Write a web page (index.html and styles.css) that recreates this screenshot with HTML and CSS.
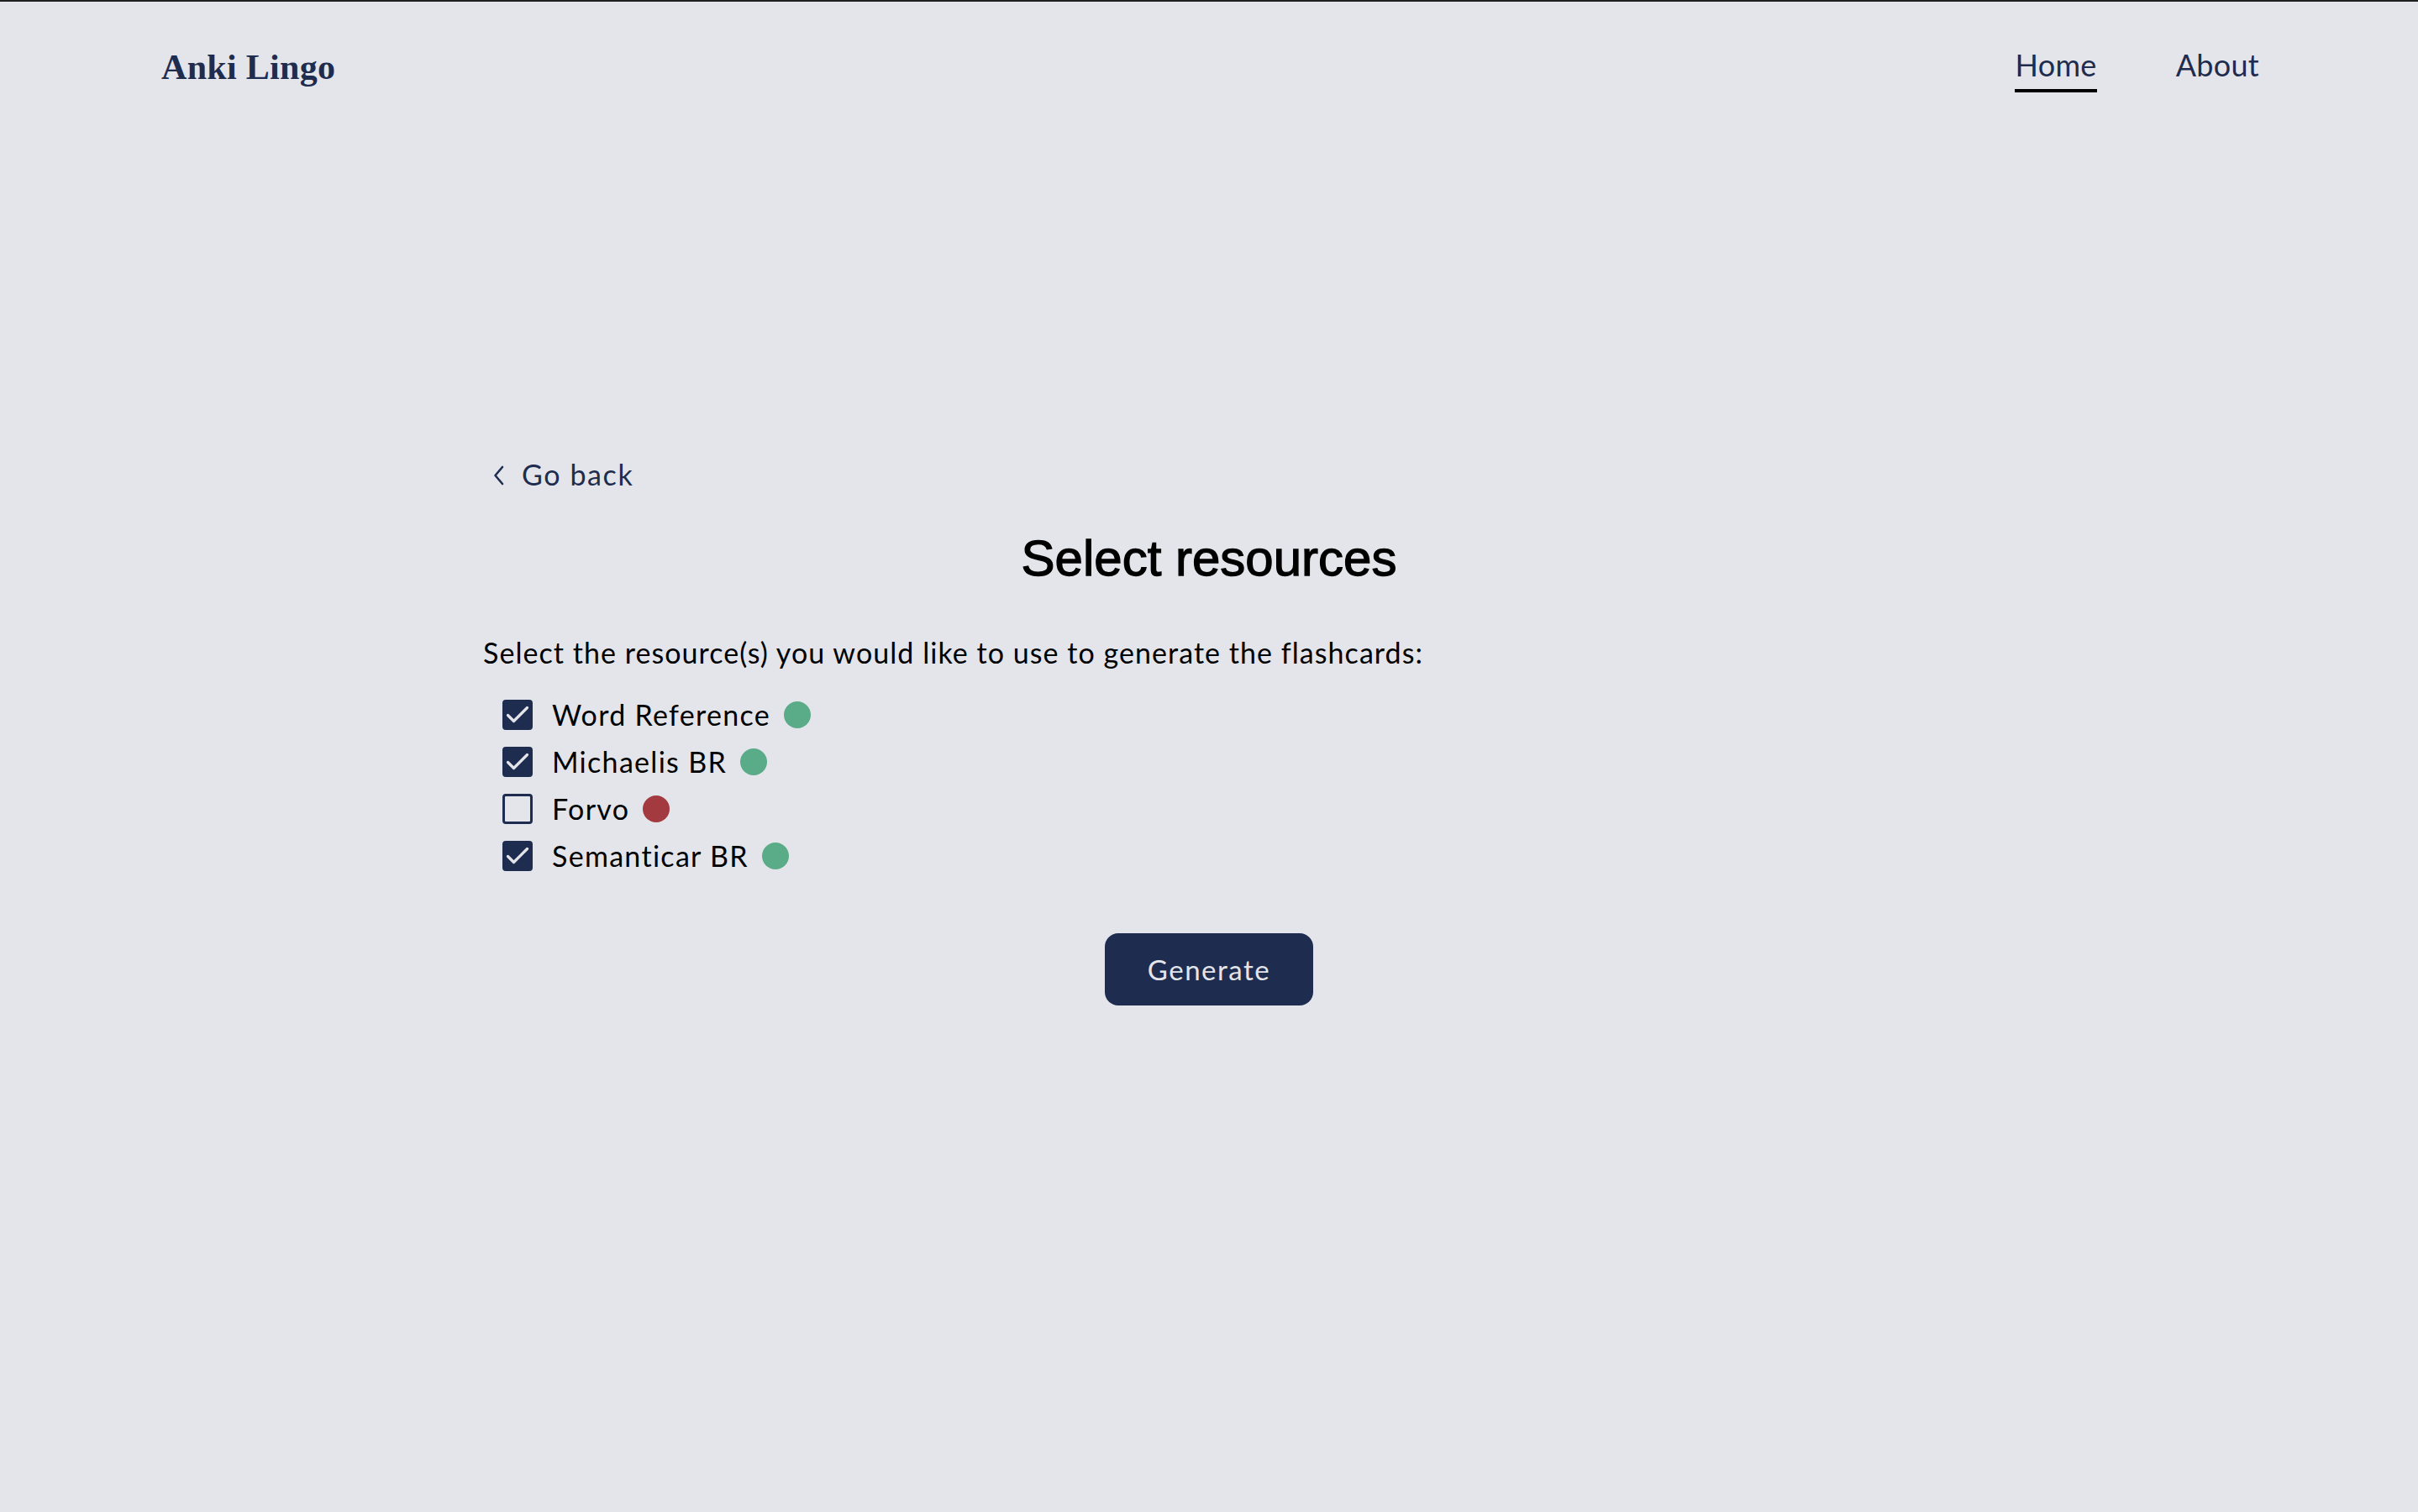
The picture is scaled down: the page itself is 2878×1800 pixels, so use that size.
FILE: index.html
```html
<!DOCTYPE html>
<html lang="en">
<head>
<meta charset="utf-8">
<title>Anki Lingo</title>
<link rel="stylesheet" href="styles.css">
</head>
<body>
<header class="header">
  <a class="logo" href="#">Anki Lingo</a>
  <nav class="nav">
    <a class="nav-link active" href="#">Home</a>
    <a class="nav-link" href="#">About</a>
  </nav>
</header>
<main class="main">
  <a class="back" href="#">
    <svg class="chev" width="14" height="24" viewBox="0 0 14 24"><path d="M11 2 L2.5 12 L11 22" fill="none" stroke="#1e2d4f" stroke-width="2.6" stroke-linecap="round" stroke-linejoin="round"/></svg>
    <span>Go back</span>
  </a>
  <h1 class="title">Select resources</h1>
  <p class="lead">Select the resource(s) you would like to use to generate the flashcards:</p>
  <ul class="list">
    <li class="row"><span class="box checked"><svg width="36" height="36" viewBox="0 0 36 36"><path d="M6.5 18.5 L13.5 25.5 L29.5 9.5" fill="none" stroke="#e4e5ea" stroke-width="3.2" stroke-linecap="round" stroke-linejoin="round"/></svg></span><span class="label">Word Reference</span><span class="dot ok"></span></li>
    <li class="row"><span class="box checked"><svg width="36" height="36" viewBox="0 0 36 36"><path d="M6.5 18.5 L13.5 25.5 L29.5 9.5" fill="none" stroke="#e4e5ea" stroke-width="3.2" stroke-linecap="round" stroke-linejoin="round"/></svg></span><span class="label">Michaelis BR</span><span class="dot ok"></span></li>
    <li class="row"><span class="box"></span><span class="label">Forvo</span><span class="dot bad"></span></li>
    <li class="row"><span class="box checked"><svg width="36" height="36" viewBox="0 0 36 36"><path d="M6.5 18.5 L13.5 25.5 L29.5 9.5" fill="none" stroke="#e4e5ea" stroke-width="3.2" stroke-linecap="round" stroke-linejoin="round"/></svg></span><span class="label">Semanticar BR</span><span class="dot ok"></span></li>
  </ul>
  <div class="actions">
    <button class="btn" type="button">Generate</button>
  </div>
</main>
</body>
</html>
```

FILE: styles.css
```css
* { box-sizing: border-box; }
html, body { margin: 0; padding: 0; }
body {
  background: #e4e5ea;
  border-top: 2px solid #1f1f1f;
  min-height: 1800px;
  font-family: Lato, "Open Sans", sans-serif;
  letter-spacing: 1.05px;
  color: #000;
}
a { text-decoration: none; }

.header {
  display: flex;
  justify-content: space-between;
  align-items: center;
  height: 156px;
  padding: 0 189px 0 192px;
}
.logo {
  font-family: "Liberation Serif", "DejaVu Serif", serif;
  font-weight: 700;
  font-size: 42px;
  line-height: 1;
  letter-spacing: 0.3px;
  color: #1e2d4f;
  margin-top: 0;
}
.nav {
  display: flex;
  gap: 94px;
  align-items: flex-start;
  margin-top: 6px;
}
.nav-link {
  font-size: 36px;
  line-height: 40px;
  letter-spacing: 0.3px;
  color: #1e2d4f;
  padding-bottom: 9px;
  border-bottom: 4px solid transparent;
}
.nav-link.active { border-bottom-color: #000; }

.main {
  width: 1728px;
  margin: 0 auto;
  padding-top: 387px;
}
.back {
  display: inline-flex;
  align-items: center;
  gap: 20px;
  margin-left: 12px;
  font-size: 34px;
  line-height: 40px;
  letter-spacing: 1.6px;
  color: #1e2d4f;
}
.chev { display: block; margin-top: 2px; }

.title {
  margin: 44px 0 0;
  text-align: center;
  font-family: "Liberation Sans", Arial, sans-serif;
  font-weight: 400;
  font-size: 60px;
  line-height: 72px;
  letter-spacing: 0;
  -webkit-text-stroke: 1.3px #000;
  color: #000;
}
.lead {
  margin: 56px 0 0;
  font-size: 34px;
  line-height: 40px;
}
.list {
  list-style: none;
  margin: 26px 0 0;
  padding: 0 0 0 23px;
}
.row {
  display: flex;
  align-items: center;
  height: 56px;
}
.box {
  width: 36px;
  height: 36px;
  border: 3px solid #1e2d4f;
  border-radius: 4px;
  flex: none;
  position: relative;
}
.box.checked { background: #1e2d4f; }
.box svg { position: absolute; left: -3px; top: -3px; }
.label {
  margin-left: 23px;
  font-size: 34px;
  line-height: 40px;
  letter-spacing: 1.3px;
}
.dot {
  width: 32px;
  height: 32px;
  border-radius: 50%;
  margin-left: 16px;
  flex: none;
}
.dot.ok { background: #5aab87; }
.dot.bad { background: #a23a40; }

.actions {
  display: flex;
  justify-content: center;
  margin-top: 64px;
}
.btn {
  width: 248px;
  height: 86px;
  border: none;
  border-radius: 16px;
  background: #1e2d4f;
  color: #e4e5ea;
  font-family: Lato, sans-serif;
  font-size: 33px;
  letter-spacing: 1.5px;
  cursor: pointer;
}
```
